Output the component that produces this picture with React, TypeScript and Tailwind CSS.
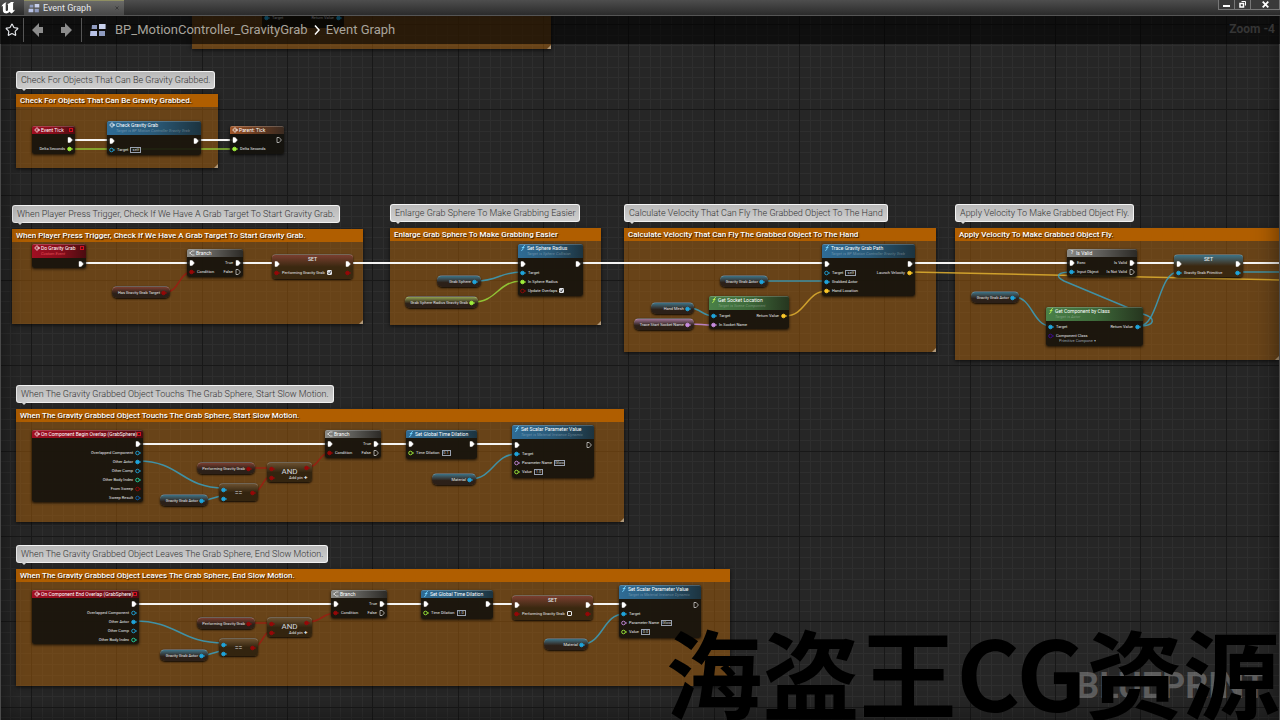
import { useState } from "react";
import { Star } from "lucide-react";
import clsx from "clsx";

type PinKind = "exec" | "object" | "bool" | "float" | "name" | "vector" | "int" | "struct" | "class";
type Tone = "event" | "call" | "parent" | "flow" | "pure";

interface Pin {
  kind: PinKind;
  label?: string;
  open?: boolean;
  value?: string;
  checked?: boolean;
  select?: string;
}

interface GraphNode {
  x: number;
  y: number;
  w: number;
  h: number;
  tone: Tone;
  title: string;
  sub?: string;
  inputs?: Pin[];
  outputs?: Pin[];
}

interface Box {
  x: number;
  y: number;
  w: number;
  h: number;
}

const pinColors: Record<PinKind, string> = {
  exec: "#ffffff",
  object: "#1fa5dc",
  bool: "#960808",
  float: "#a0f03c",
  name: "#c88ce0",
  vector: "#fcc82a",
  int: "#21d6a0",
  struct: "#0f5fae",
  class: "#3c0a96",
};

const wireColors: Partial<Record<PinKind, string>> = {
  object: "#3a9fbe",
  bool: "#9c1c12",
  float: "#98d83a",
  vector: "#e0b030",
};

const headerTones: Record<Tone, string> = {
  event: "bg-linear-to-r from-[#a00f22] via-[#8a0d1c] to-[#4a0b10]",
  call: "bg-linear-to-r from-[#2f6c96] via-[#2a5a78] to-[#1c333f]",
  parent: "bg-linear-to-r from-[#a0562a] via-[#6a3c20] to-[#3a2a20]",
  flow: "bg-linear-to-r from-[#8a8a86] via-[#5c5b57] to-[#2c2a26]",
  pure: "bg-linear-to-r from-[#4a8048] via-[#3d6a3a] to-[#26361f]",
};

const glossTones: Record<string, string> = {
  object: "from-[#3c7488]",
  bool: "from-[#7a3e30]",
  float: "from-[#8fa050]",
  name: "from-[#a07498]",
};

const exec: Pin = { kind: "exec" };

const comments: (Box & { text: string; bubble: number })[] = [
  { x: 16, y: 94, w: 202, h: 74, bubble: 71, text: "Check For Objects That Can Be Gravity Grabbed." },
  { x: 12, y: 229, w: 351, h: 95, bubble: 205, text: "When Player Press Trigger, Check If We Have A Grab Target To Start Gravity Grab." },
  { x: 390, y: 228, w: 211, h: 97, bubble: 204, text: "Enlarge Grab Sphere To Make Grabbing Easier" },
  { x: 624, y: 228, w: 312, h: 124, bubble: 204, text: "Calculate Velocity That Can Fly The Grabbed Object To The Hand" },
  { x: 955, y: 228, w: 324, h: 132, bubble: 204, text: "Apply Velocity To Make Grabbed Object Fly." },
  { x: 16, y: 409, w: 608, h: 113, bubble: 385, text: "When The Gravity Grabbed Object Touchs The Grab Sphere, Start Slow Motion." },
  { x: 16, y: 569, w: 714, h: 117, bubble: 545, text: "When The Gravity Grabbed Object Leaves The Grab Sphere, End Slow Motion." },
];

const branch = {
  tone: "flow" as Tone,
  title: "Branch",
  w: 56,
  h: 28,
  inputs: [exec, { kind: "bool", label: "Condition" } as Pin],
  outputs: [{ ...exec, label: "True" }, { ...exec, label: "False", open: true }],
};

const overlapPins: Pin[] = [
  exec,
  { kind: "object", label: "Overlapped Component", open: true },
  { kind: "object", label: "Other Actor" },
  { kind: "object", label: "Other Comp", open: true },
  { kind: "int", label: "Other Body Index", open: true },
];

const scalarPins = (value: string): Pin[] => [
  exec,
  { kind: "object", label: "Target" },
  { kind: "name", label: "Parameter Name", open: true, value: "Glow" },
  { kind: "float", label: "Value", open: true, value },
];

const nodes: GraphNode[] = [
  { x: 32, y: 126, w: 43, h: 28, tone: "event", title: "Event Tick", outputs: [exec, { kind: "float", label: "Delta Seconds" }] },
  {
    x: 107, y: 121, w: 94, h: 34, tone: "call", title: "Check Gravity Grab",
    sub: "Target is BP Motion Controller Gravity Grab",
    inputs: [exec, { kind: "object", label: "Target", open: true, value: "self" }],
    outputs: [exec],
  },
  {
    x: 230, y: 126, w: 54, h: 28, tone: "parent", title: "Parent: Tick",
    inputs: [exec, { kind: "float", label: "Delta Seconds" }],
    outputs: [{ ...exec, open: true }],
  },
  { x: 32, y: 244, w: 54, h: 24, tone: "event", title: "Do Gravity Grab", sub: "Custom Event", outputs: [exec] },
  { x: 187, y: 249, ...branch },
  {
    x: 518, y: 244, w: 65, h: 52, tone: "call", title: "Set Sphere Radius", sub: "Target is Sphere Collision",
    inputs: [
      exec,
      { kind: "object", label: "Target" },
      { kind: "float", label: "In Sphere Radius" },
      { kind: "bool", label: "Update Overlaps", open: true, checked: true },
    ],
    outputs: [exec],
  },
  {
    x: 822, y: 244, w: 93, h: 52, tone: "call", title: "Trace Gravity Grab Path",
    sub: "Target is BP Motion Controller Gravity Grab",
    inputs: [
      exec,
      { kind: "object", label: "Target", open: true, value: "self" },
      { kind: "object", label: "Grabbed Actor" },
      { kind: "vector", label: "Hand Location" },
    ],
    outputs: [exec, { kind: "vector", label: "Launch Velocity" }],
  },
  {
    x: 709, y: 296, w: 80, h: 33, tone: "pure", title: "Get Socket Location", sub: "Target is Scene Component",
    inputs: [{ kind: "object", label: "Target" }, { kind: "name", label: "In Socket Name" }],
    outputs: [{ kind: "vector", label: "Return Value" }],
  },
  {
    x: 1067, y: 249, w: 70, h: 28, tone: "flow", title: "Is Valid",
    inputs: [{ ...exec, label: "Exec" }, { kind: "object", label: "Input Object" }],
    outputs: [{ ...exec, label: "Is Valid" }, { ...exec, label: "Is Not Valid", open: true }],
  },
  {
    x: 1046, y: 307, w: 97, h: 39, tone: "pure", title: "Get Component by Class", sub: "Target is Actor",
    inputs: [
      { kind: "object", label: "Target" },
      { kind: "class", label: "Component Class", open: true, select: "Primitive Compone ▾" },
    ],
    outputs: [{ kind: "object", label: "Return Value" }],
  },
  {
    x: 32, y: 430, w: 111, h: 72, tone: "event", title: "On Component Begin Overlap (GrabSphere)",
    outputs: [
      ...overlapPins,
      { kind: "bool", label: "From Sweep", open: true },
      { kind: "struct", label: "Sweep Result", open: true },
    ],
  },
  { x: 325, y: 430, ...branch },
  {
    x: 406, y: 430, w: 71, h: 29, tone: "call", title: "Set Global Time Dilation",
    inputs: [exec, { kind: "float", label: "Time Dilation", open: true, value: "0.1" }],
    outputs: [exec],
  },
  {
    x: 512, y: 425, w: 82, h: 53, tone: "call", title: "Set Scalar Parameter Value",
    sub: "Target is Material Instance Dynamic",
    inputs: scalarPins("1.0"),
    outputs: [{ ...exec, open: true }],
  },
  { x: 32, y: 590, w: 107, h: 54, tone: "event", title: "On Component End Overlap (GrabSphere)", outputs: overlapPins },
  { x: 331, y: 590, ...branch },
  {
    x: 421, y: 590, w: 72, h: 29, tone: "call", title: "Set Global Time Dilation",
    inputs: [exec, { kind: "float", label: "Time Dilation", open: true, value: "1.0" }],
    outputs: [exec],
  },
  {
    x: 619, y: 585, w: 82, h: 53, tone: "call", title: "Set Scalar Parameter Value",
    sub: "Target is Material Instance Dynamic",
    inputs: scalarPins("0.0"),
    outputs: [{ ...exec, open: true }],
  },
];

const setters: (Box & { pin: Pin })[] = [
  { x: 272, y: 254, w: 81, h: 25, pin: { kind: "bool", label: "Performing Gravity Grab", checked: true } },
  { x: 1174, y: 254, w: 69, h: 23, pin: { kind: "object", label: "Gravity Grab Primitive" } },
  { x: 512, y: 595, w: 81, h: 25, pin: { kind: "bool", label: "Performing Gravity Grab", checked: false } },
];

const variables: { x: number; y: number; w: number; kind: PinKind; label: string }[] = [
  { x: 112, y: 286, w: 58, kind: "bool", label: "Has Gravity Grab Target" },
  { x: 437, y: 275, w: 44, kind: "object", label: "Grab Sphere" },
  { x: 405, y: 296, w: 73, kind: "float", label: "Grab Sphere Radius Gravity Grab" },
  { x: 720, y: 275, w: 48, kind: "object", label: "Gravity Grab Actor" },
  { x: 651, y: 302, w: 43, kind: "object", label: "Hand Mesh" },
  { x: 634, y: 318, w: 60, kind: "name", label: "Trace Start Socket Name" },
  { x: 971, y: 291, w: 48, kind: "object", label: "Gravity Grab Actor" },
  { x: 197, y: 462, w: 58, kind: "bool", label: "Performing Gravity Grab" },
  { x: 160, y: 494, w: 48, kind: "object", label: "Gravity Grab Actor" },
  { x: 432, y: 473, w: 44, kind: "object", label: "Material" },
  { x: 197, y: 617, w: 58, kind: "bool", label: "Performing Gravity Grab" },
  { x: 160, y: 649, w: 48, kind: "object", label: "Gravity Grab Actor" },
  { x: 544, y: 638, w: 44, kind: "object", label: "Material" },
];

const operators = [
  { x: 267, y: 462, and: true },
  { x: 219, y: 483, and: false },
  { x: 267, y: 617, and: true },
  { x: 219, y: 638, and: false },
];

// x1, y1, x2, y2
const wires: [PinKind, number, number, number, number][] = [
  ["exec", 70, 140, 112, 140],
  ["exec", 196, 140, 234, 140],
  ["float", 70, 149, 234, 149],
  ["exec", 82, 263, 192, 263],
  ["exec", 238, 263, 277, 263],
  ["exec", 348, 263, 522, 263],
  ["exec", 578, 263, 827, 263],
  ["exec", 911, 263, 1072, 263],
  ["exec", 1133, 263, 1178, 263],
  ["exec", 1239, 263, 1279, 263],
  ["bool", 166, 292, 192, 272],
  ["object", 476, 281, 522, 272],
  ["float", 473, 302, 522, 281],
  ["object", 763, 281, 827, 281],
  ["object", 689, 308, 714, 316],
  ["name", 689, 324, 714, 325],
  ["vector", 785, 316, 827, 291],
  ["vector", 911, 272, 1279, 280],
  ["object", 1014, 297, 1051, 326],
  ["object", 1139, 326, 1178, 272],
  ["object", 1239, 272, 1279, 272],
  ["exec", 138, 444, 330, 444],
  ["exec", 376, 444, 411, 444],
  ["exec", 472, 444, 517, 444],
  ["object", 138, 461, 224, 488],
  ["object", 203, 500, 224, 496],
  ["bool", 249, 468, 272, 468],
  ["bool", 253, 492, 272, 476],
  ["bool", 308, 467, 330, 453],
  ["object", 470, 479, 517, 454],
  ["exec", 134, 604, 336, 604],
  ["exec", 382, 604, 426, 604],
  ["exec", 488, 604, 517, 604],
  ["exec", 588, 604, 624, 604],
  ["object", 134, 621, 224, 643],
  ["object", 203, 655, 224, 651],
  ["bool", 249, 623, 272, 623],
  ["bool", 253, 647, 272, 631],
  ["bool", 308, 622, 336, 613],
  ["object", 582, 644, 624, 614],
];

// 24 cells per 256px tile, every eighth line is a heavy one
const gridSteps = Array.from({ length: 24 }, (_, i) => Math.round((i * 256) / 24));
const minorSteps = gridSteps.filter((_, i) => i % 8 !== 0);
const majorSteps = gridSteps.filter((_, i) => i % 8 === 0);

const gridLine = (p: number) => `M${p} 0h1v256h-1z M0 ${p}h256v1h-256z`;

const place = ({ x, y, w, h }: Box) => ({ left: x, top: y, width: w, height: h });

function Grid() {
  return (
    <svg className="absolute inset-0 h-full w-full" aria-hidden="true" shapeRendering="crispEdges">
      <defs>
        <pattern id="grid" x="31" y="24" width="256" height="256" patternUnits="userSpaceOnUse">
          {minorSteps.map((p) => (
            <path key={p} d={gridLine(p)} fill="#2e2e2e" />
          ))}
          {majorSteps.map((p) => (
            <path key={p} d={gridLine(p)} fill="#181818" />
          ))}
        </pattern>
      </defs>
      <rect width="100%" height="100%" fill="url(#grid)" />
    </svg>
  );
}

function Wires() {
  return (
    <svg className="absolute inset-0 h-full w-full" aria-hidden="true" fill="none">
      {wires.map(([kind, x1, y1, x2, y2]) => {
        const bend = Math.abs(y2 - y1) < 10 && x2 - x1 > 100 ? 0 : (x2 - x1) / 2;
        return (
          <path
            key={`${x1}-${y1}-${x2}-${y2}`}
            d={`M${x1} ${y1}C${x1 + bend} ${y1} ${x2 - bend} ${y2} ${x2} ${y2}`}
            stroke={wireColors[kind] ?? pinColors[kind]}
            strokeWidth={kind === "exec" ? 2 : 1.5}
            opacity={kind === "exec" ? 0.95 : 0.85}
          />
        );
      })}
      {/* return value looping back to Is Valid */}
      <path
        d="M1139 326C1156 326 1156 318 1143 314L1064 281C1054 276 1058 272 1072 272"
        stroke={wireColors.object}
        strokeWidth="1.5"
        opacity="0.85"
      />
    </svg>
  );
}

function PinIcon({ kind, open }: { kind: PinKind; open?: boolean }) {
  const color = pinColors[kind];
  if (kind === "exec") {
    return (
      <svg viewBox="0 0 6 6" className="h-[6px] w-[6px] shrink-0" aria-hidden="true">
        <path
          d="M1 .5h2.2L5.4 3 3.2 5.5H1z"
          fill={open ? "none" : color}
          stroke={color}
          strokeWidth={open ? 0.6 : 0.4}
          strokeLinejoin="round"
        />
      </svg>
    );
  }
  return (
    <svg viewBox="0 0 6 6" className="h-[6px] w-[6px] shrink-0" aria-hidden="true">
      <circle cx="2.5" cy="3" r="1.8" fill={open ? "none" : color} stroke={color} strokeWidth=".9" />
      <path d="M4.6 1.8 6 3 4.6 4.2z" fill={color} />
    </svg>
  );
}

function Tick({ label, checked }: { label: string; checked: boolean }) {
  const [on, setOn] = useState(checked);
  return (
    <span className="relative flex h-[5px] w-[5px] shrink-0">
      <input
        type="checkbox"
        aria-label={label}
        checked={on}
        onChange={() => setOn(!on)}
        className="h-[5px] w-[5px] appearance-none rounded-[1px] border border-gray-200 checked:bg-gray-300"
      />
      {on && (
        <svg viewBox="0 0 5 5" className="pointer-events-none absolute inset-0" fill="none" stroke="#222">
          <path d="M1 2.5 2.2 3.8 4.2 1" strokeWidth=".8" />
        </svg>
      )}
    </span>
  );
}

function PinRow({ pin, side }: { pin: Pin; side: "in" | "out" }) {
  return (
    <div className={clsx("flex h-[9px] items-center gap-[2px]", side === "out" && "flex-row-reverse")}>
      <PinIcon kind={pin.kind} open={pin.open} />
      {pin.select ? (
        <label className="flex flex-col pt-[4px] text-[4px] leading-[5px]">
          {pin.label}
          <select className="h-[5px] w-[40px] appearance-none pl-[3px] text-[4px] leading-[5px] text-gray-400">
            <option>{pin.select}</option>
          </select>
        </label>
      ) : (
        pin.label && <span className="text-[4px] leading-[8px] whitespace-nowrap">{pin.label}</span>
      )}
      {pin.value && (
        <input
          type="text"
          aria-label={pin.label}
          defaultValue={pin.value}
          className={clsx(
            "h-[6px] border border-gray-400 text-center text-[4px] leading-[4px] text-gray-300",
            pin.value.length > 3 ? "w-[11px]" : "w-[9px]",
          )}
        />
      )}
      {pin.checked !== undefined && <Tick label={pin.label ?? ""} checked={pin.checked} />}
    </div>
  );
}

function HeaderIcon({ tone, title }: { tone: Tone; title: string }) {
  if (title === "Is Valid") return <span className="w-[6px] text-center text-[5px] font-bold">?</span>;
  if (tone === "flow") {
    return (
      <svg viewBox="0 0 6 6" className="h-[6px] w-[6px]" fill="none" stroke="#eee" strokeWidth=".7">
        <path d="M5.500 1H3L1 3l2 2h2.500M1 3H0" />
      </svg>
    );
  }
  if (title !== "Check Gravity Grab" && (tone === "call" || tone === "pure")) {
    return (
      <svg
        viewBox="0 0 6 6"
        className={clsx("h-[6px] w-[6px]", tone === "pure" ? "text-lime-300" : "text-sky-300")}
        fill="none"
        stroke="currentColor"
        strokeWidth=".9"
      >
        <path d="M5 .6C3.6.3 3.4 1.4 3.1 3S2.4 5.7 1.2 5.4M1.8 2.5h2.6" />
      </svg>
    );
  }
  return (
    <svg viewBox="0 0 6 6" className="h-[6px] w-[6px]" fill="none" stroke="#fff" strokeWidth=".8">
      <path d="M3 .6.7 3 3 5.4M3 .6 5.3 3 3 5.4M2.6 3H6" />
    </svg>
  );
}

function NodeCard({ node }: { node: GraphNode }) {
  return (
    <article
      style={place(node)}
      className="absolute flex flex-col rounded-[2px] bg-[#14120c]/90 text-gray-200 shadow-[0_1px_3px_rgba(0,0,0,0.8)]"
    >
      <header
        className={clsx(
          "flex shrink-0 items-start justify-between rounded-t-[2px] border-t border-white/20 px-[2px]",
          headerTones[node.tone],
          node.sub ? "h-[14px]" : "h-[8px]",
        )}
      >
        <div className="flex min-w-0 gap-[1px]">
          <span className="flex h-[6px] items-center">
            <HeaderIcon tone={node.tone} title={node.title} />
          </span>
          <div>
            <h3 className="text-[5px] leading-[6px] whitespace-nowrap text-white">{node.title}</h3>
            {node.sub && (
              <p
                className={clsx(
                  "text-[4px] leading-[6px] whitespace-nowrap italic",
                  node.tone === "event" ? "text-red-400/70" : "text-white/30",
                )}
              >
                {node.sub}
              </p>
            )}
          </div>
        </div>
        {node.tone === "event" && <span className="mt-[1px] h-[4px] w-[4px] shrink-0 border border-[#d01020]" />}
      </header>
      <div className="flex justify-between px-[2px] pt-px">
        <div>
          {node.inputs?.map((pin, i) => <PinRow key={i} pin={pin} side="in" />)}
        </div>
        <div>
          {node.outputs?.map((pin, i) => <PinRow key={i} pin={pin} side="out" />)}
        </div>
      </div>
    </article>
  );
}

const compactShell =
  "absolute border-t border-white/30 bg-linear-to-b text-gray-200 shadow-[0_1px_2px_rgba(0,0,0,0.9)]";

function SetNode({ item }: { item: Box & { pin: Pin } }) {
  const { pin } = item;
  return (
    <article
      style={place(item)}
      className={clsx(compactShell, glossTones[pin.kind], "rounded-[4px] to-[#3a2810] to-50% px-[2px]")}
    >
      <h3 className="h-[4px] text-center text-[5px] leading-[8px] font-medium">SET</h3>
      <div className="flex justify-between">
        <div>
          <PinRow pin={exec} side="in" />
          <PinRow pin={pin} side="in" />
        </div>
        <div>
          <PinRow pin={exec} side="out" />
          <PinRow pin={{ kind: pin.kind }} side="out" />
        </div>
      </div>
    </article>
  );
}

function VariableNode({ item }: { item: (typeof variables)[number] }) {
  return (
    <div
      style={{ left: item.x, top: item.y, width: item.w }}
      className={clsx(
        compactShell,
        glossTones[item.kind],
        "flex h-[12px] items-center justify-end gap-[1px] rounded-[5px] to-[#2c2018] to-60% pr-[3px]",
      )}
    >
      <span className="text-[4px] leading-[8px] whitespace-nowrap">{item.label}</span>
      <PinIcon kind={item.kind} />
    </div>
  );
}

function OperatorNode({ item }: { item: (typeof operators)[number] }) {
  const kind = item.and ? "bool" : "object";
  return (
    <div
      style={{ left: item.x, top: item.y }}
      className={clsx(
        compactShell,
        "flex justify-between rounded-[4px] from-[#6a5030] to-[#33240f] to-50% px-[2px]",
        item.and ? "h-[20px] w-[45px]" : "h-[18px] w-[39px]",
      )}
    >
      <div className="pt-px">
        <PinRow pin={{ kind }} side="in" />
        <PinRow pin={{ kind }} side="in" />
      </div>
      {item.and ? (
        <div className="flex flex-col items-end">
          <span className="pt-[4px] text-[8px] leading-[9px] text-gray-300">AND</span>
          <button type="button" className="-mr-[9px] text-[4px] leading-[4px] whitespace-nowrap">
            Add pin ✚
          </button>
        </div>
      ) : (
        <span className="self-center text-[7px] leading-[8px] text-gray-300">==</span>
      )}
      <div className={item.and ? "" : "self-center"}>
        <PinRow pin={{ kind: "bool" }} side="out" />
      </div>
    </div>
  );
}

function CommentBox({ item }: { item: (typeof comments)[number] }) {
  return (
    <>
      <div
        style={{ left: item.x, top: item.bubble }}
        className="absolute flex h-[18px] items-center rounded-[3px] border border-white/80 bg-linear-to-b from-[#b9b9b9] to-[#cfcfcf] px-[4px]"
      >
        <p className="text-[9px] leading-[12px] font-light whitespace-nowrap text-[#333]">{item.text}</p>
        <span className="absolute top-full left-[4px] border-x-[3px] border-t-[3px] border-x-transparent border-t-[#d8d8d8]" />
      </div>
      <section style={place(item)} className="absolute bg-[#aa5f0a]/50 shadow-[0_1px_4px_rgba(0,0,0,0.7)]">
        <h2 className="h-[13px] bg-[#b05e00] px-[4px] text-[8px] leading-[14px] font-medium whitespace-nowrap text-white [text-shadow:1px_1px_1px_rgba(0,0,0,0.8)]">
          {item.text}
        </h2>
        <ResizeGrip />
      </section>
    </>
  );
}

function ResizeGrip() {
  return (
    <svg viewBox="0 0 4 4" className="absolute right-0 bottom-0 h-[4px] w-[4px]" aria-hidden="true">
      <path d="M4 0v4H0z" fill="#b09878" />
    </svg>
  );
}

function BlueprintIcon({ className }: { className: string }) {
  return (
    <svg viewBox="0 0 16 13" className={className} aria-hidden="true">
      <path d="M2 1h5v4H1.6z" fill="#8f9bc0" />
      <path d="M9 0h6.6v5H9z" fill="#c8d0ec" />
      <path d="M.4 7H7v5H0z" fill="#b8c2e6" />
      <path d="M9 7h6v5H9z" fill="#8f9bc0" />
    </svg>
  );
}

function TitleBar() {
  return (
    <header className="relative z-10 flex h-4 items-start justify-between border-b border-[#555] bg-linear-to-b from-[#4e4e4e] to-[#2b2b2b]">
      <div className="flex h-full items-center">
        <svg viewBox="0 0 14 13" className="ml-px h-[13px] w-[14px]" role="img" aria-label="Unreal Engine">
          <path
            d="M.4 5.500C1.400 3 3.200 1.800 5.600 1.200 4.900 1.800 4.700 2.400 4.700 3.300v5.400c0 .8.3 1.200.9 1.200.5 0 1-.3 1.400-.7V4.100c0-.7-.2-1-.8-1.200 1.600-.2 2.800-.9 3.700-1.900h3.200c-.7.5-1 1-1 1.900v5.600c0 .6.3.8.7.7.4 0 .8-.4 1.200-.9-.5 2-2 3.500-3.700 4.200L8.500 10.700C7.400 12 5.800 12.600 4.300 12.300 2.700 12 1.900 10.900 1.900 9.200V5.500c0-.7-.6-.8-1.500 0z"
            fill="#fff"
          />
        </svg>
        <div className="ml-[9px] flex h-full w-[100px] items-center justify-between border-t border-[#8f8f62] bg-linear-to-b from-[#6a6a68] to-[#484848] px-[4px] text-gray-200">
          <button type="button" className="flex items-center gap-[3px] text-[9px] leading-[12px]">
            <BlueprintIcon className="h-[9px] w-[12px]" />
            Event Graph
          </button>
          <button type="button" aria-label="Close tab" className="mr-px">
            <svg viewBox="0 0 4 4" className="h-[4px] w-[4px]" stroke="#3a3a3a">
              <path d="M.5.5l3 3M3.500.5l-3 3" />
            </svg>
          </button>
        </div>
      </div>
      <div className="flex h-[10px] w-[62px] divide-x divide-[#777] border border-t-0 border-[#777] bg-[#3a3a3a]">
        <button type="button" aria-label="Minimize" className="flex flex-1 items-center justify-center">
          <span className="mt-[2px] h-[2px] w-[7px] bg-white" />
        </button>
        <button type="button" aria-label="Restore" className="flex flex-1 items-center justify-center">
          <svg viewBox="0 0 7 7" className="h-[7px] w-[7px]" fill="none" stroke="#fff">
            <path d="M1 2.500h3.500V6H1z" strokeWidth="1.500" />
            <path d="M2.500.5h4v4" />
          </svg>
        </button>
        <button type="button" aria-label="Close" className="flex w-[28px] items-center justify-center">
          <svg viewBox="0 0 7 7" className="h-[7px] w-[7px]" stroke="#fff" strokeWidth="1.800">
            <path d="M.7.7l5.600 5.600M6.300.7.7 6.300" />
          </svg>
        </button>
      </div>
    </header>
  );
}

function Toolbar() {
  return (
    <nav className="relative z-10 flex h-7 items-center justify-between bg-black/60 px-[5px]">
      <div className="flex items-center text-[#a8a49c]">
        <button type="button" aria-label="Favorite" className="w-[18px]">
          <Star className="h-[14px] w-[14px] text-gray-200" strokeWidth={2} />
        </button>
        <span className="h-[24px] w-px bg-[#555]" />
        <button type="button" aria-label="Back" className="ml-[8px]">
          <svg viewBox="0 0 12 14" className="h-[14px] w-[12px]">
            <path d="M0 7 7 0v4h4v6H7v4z" fill="#8c8c8c" />
          </svg>
        </button>
        <button type="button" aria-label="Forward" className="ml-[16px]">
          <svg viewBox="0 0 12 14" className="h-[14px] w-[12px]">
            <path d="M12 7 5 0v4H1v6h4v4z" fill="#8c8c8c" />
          </svg>
        </button>
        <span className="ml-[9px] h-[24px] w-px bg-[#555]" />
        <BlueprintIcon className="ml-[8px] h-[13px] w-[16px]" />
        <a href="#blueprint" className="ml-[9px] text-[13px] leading-[16px]">
          BP_MotionController_GravityGrab
        </a>
        <svg viewBox="0 0 6 10" className="mx-[6px] h-[10px] w-[6px]" fill="none" stroke="#fff" strokeWidth="1.500">
          <path d="M1 .5 5 5 1 9.500" />
        </svg>
        <a href="#event-graph" className="text-[13px] leading-[16px]">
          Event Graph
        </a>
      </div>
      <span className="-mt-[3px] text-[12px] leading-[16px] font-bold text-[#353535]">Zoom -4</span>
    </nav>
  );
}

export default function App() {
  return (
    <div className="relative h-screen overflow-hidden bg-[#262626] font-[Roboto,'Noto_Sans',sans-serif]">
      <main className="absolute inset-0 overflow-hidden">
        <Grid />
        <section className="absolute top-0 left-[192px] h-[49px] w-[359px] bg-[#aa5f0a]/50 shadow-[0_1px_4px_rgba(0,0,0,0.7)]">
          <div className="ml-[70px] flex h-[28px] w-[82px] items-end justify-between rounded-[2px] bg-[#14120c]/90 px-[2px] pb-[6px] text-gray-300">
            <PinRow pin={{ kind: "object", label: "Target" }} side="in" />
            <PinRow pin={{ kind: "object", label: "Return Value" }} side="out" />
          </div>
          <ResizeGrip />
        </section>
        {comments.map((item) => (
          <CommentBox key={item.text} item={item} />
        ))}
        <Wires />
        {nodes.map((node) => (
          <NodeCard key={`${node.x}-${node.y}`} node={node} />
        ))}
        {setters.map((item) => (
          <SetNode key={`${item.x}-${item.y}`} item={item} />
        ))}
        {variables.map((item) => (
          <VariableNode key={`${item.x}-${item.y}`} item={item} />
        ))}
        {operators.map((item) => (
          <OperatorNode key={`${item.x}-${item.y}`} item={item} />
        ))}
        <div className="pointer-events-none absolute inset-0 border-x border-[#4a4a4a] shadow-[inset_0_0_24px_rgba(0,0,0,0.5)]" />
        <p className="absolute right-[14px] bottom-[10px] text-[36px] leading-[48px] font-bold text-white/25">
          BLUEPRINT
        </p>
        <p className="absolute right-0 bottom-0 font-['Noto_Sans_CJK_SC',sans-serif] text-[97px] leading-[100px] font-bold whitespace-nowrap text-black">
          海盗王CG资源
        </p>
      </main>
      <TitleBar />
      <Toolbar />
    </div>
  );
}
